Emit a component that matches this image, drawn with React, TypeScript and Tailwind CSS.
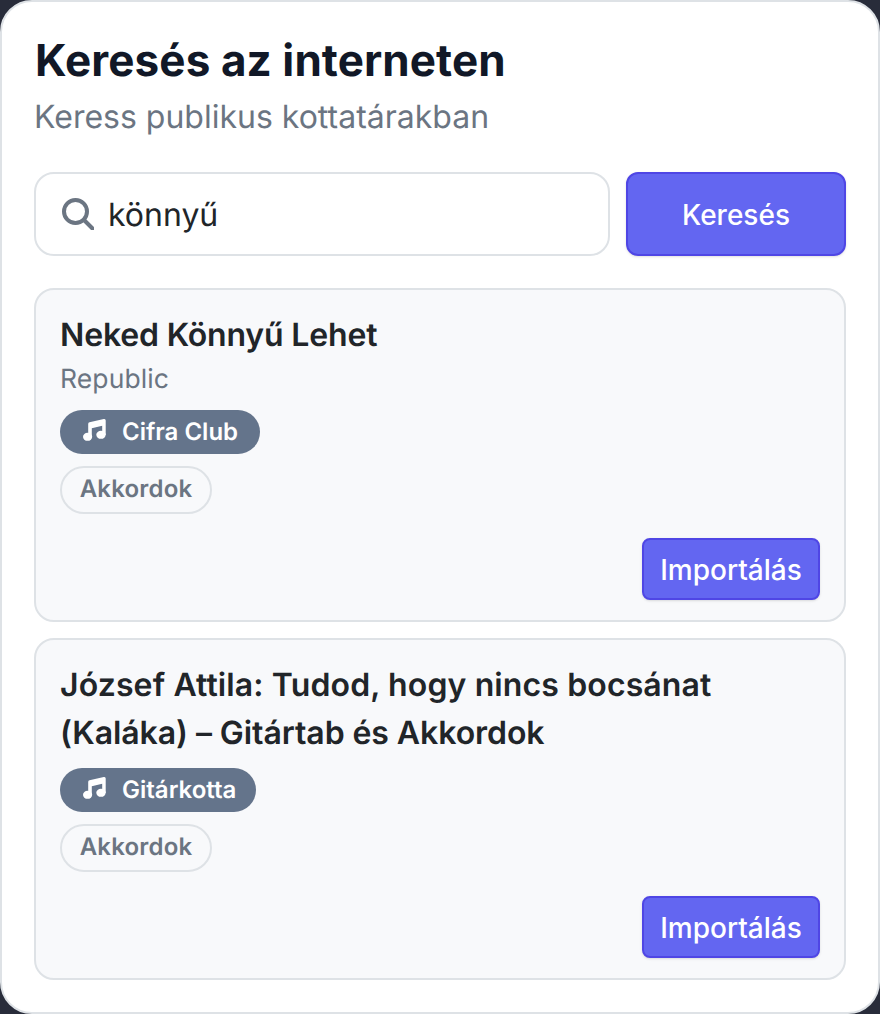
function MusicIcon() {
  return (
    <svg viewBox="0 0 24 28" className="h-[28px] w-[24px] shrink-0" fill="currentColor" aria-hidden="true">
      <path d="M6.2 6Q6.2 4.6 7.5 4.3L21.8 1Q23.7 0.6 23.7 2.5V17H20.2V7.8L9.8 10.2V19H6.2Z" />
      <ellipse cx="5.6" cy="18.8" rx="4.6" ry="4" />
      <ellipse cx="19" cy="16.8" rx="4.7" ry="4" />
    </svg>
  );
}

function SearchIcon() {
  return (
    <svg viewBox="0 0 32 32" className="h-[32px] w-[32px] shrink-0 text-[#6b7582]" fill="none" stroke="currentColor" strokeWidth="4" aria-hidden="true">
      <circle cx="13.5" cy="13.5" r="11.5" />
      <path d="M22 22L30.5 30.5" strokeLinecap="round" />
    </svg>
  );
}

function Result({ title, artist, source, sourceW }: { title: [string, string][]; artist?: string; source: string; sourceW: string }) {
  return (
    <div className="flex flex-col rounded-[20px] border-2 border-[#dee2e6] bg-[#f8f9fb] px-[24px] pt-[21px] pb-[20px]">
      <div className="mb-[1px] text-[32px] font-semibold leading-[48px] text-[#212529]">
        {title.map(([t, cls]) => (
          <div key={t} className={cls}>
            {t}
          </div>
        ))}
      </div>
      {artist && <div className="mb-[1px] text-[26.5px] leading-[39px] tracking-[0.1px] text-[#6b7582]">{artist}</div>}
      <div className={`mt-[10px] flex h-[44px] items-center gap-[16px] self-start rounded-full bg-[#64748b] pl-[22px] text-[24px] font-semibold text-white ${sourceW}`}>
        <MusicIcon />
        <span>{source}</span>
      </div>
      <div className="mt-[12px] flex h-[48px] w-[152px] items-center justify-center rounded-full border-2 border-[#dee2e6] bg-[#f8f9fb] pb-[2px] text-[24px] font-semibold tracking-[0.2px] text-[#6b7582]">
        Akkordok
      </div>
      <div className="mt-[24px] flex justify-end">
        <button className="flex h-[62px] w-[178px] items-center justify-center rounded-[8px] border-2 border-[#4f46e5] bg-[#6366f1] pt-[2px] text-[28px] font-medium text-white shadow-sm">
          Importálás
        </button>
      </div>
    </div>
  );
}

export default function App() {
  return (
    <div className="h-[1014px] w-[880px] bg-[#282c3a] font-['Inter',sans-serif] antialiased [text-rendering:geometricPrecision]">
      <div className="flex h-full flex-col rounded-[32px] border-2 border-[#dee2e6] bg-white px-[32px] pt-[32px]">
        <h1 className="pl-[1px] text-[44px] font-bold leading-[52px] tracking-[0.1px] text-[#111827]">Keresés az interneten</h1>
        <p className="mt-[7px] text-[32px] leading-[48px] text-[#6b7582]">Keress publikus kottatárakban</p>
        <div className="mt-[31px] flex gap-[16px]">
          <div className="flex h-[84px] flex-1 items-center gap-[14px] rounded-[20px] border-2 border-[#dee2e6] bg-white pl-[26px] text-[32px] text-[#212529]">
            <SearchIcon />
            <span className="pt-[2px]">könnyű</span>
          </div>
          <button className="flex h-[84px] w-[220px] items-center justify-center rounded-[12px] border-2 border-[#4f46e5] bg-[#6366f1] pt-[1px] text-[28px] font-medium text-white shadow-sm">
            Keresés
          </button>
        </div>
        <div className="mt-[32px] flex flex-col gap-[16px]">
          <Result title={[["Neked Könnyű Lehet", "tracking-[-0.17px]"]]} artist="Republic" source="Cifra Club" sourceW="w-[200px]" />
          <Result
            title={[
              ["József Attila: Tudod, hogy nincs bocsánat", "tracking-[0.12px]"],
              ["(Kaláka) – Gitártab és Akkordok", "tracking-[-0.07px]"],
            ]}
            source="Gitárkotta"
            sourceW="w-[196px]"
          />
        </div>
      </div>
    </div>
  );
}
